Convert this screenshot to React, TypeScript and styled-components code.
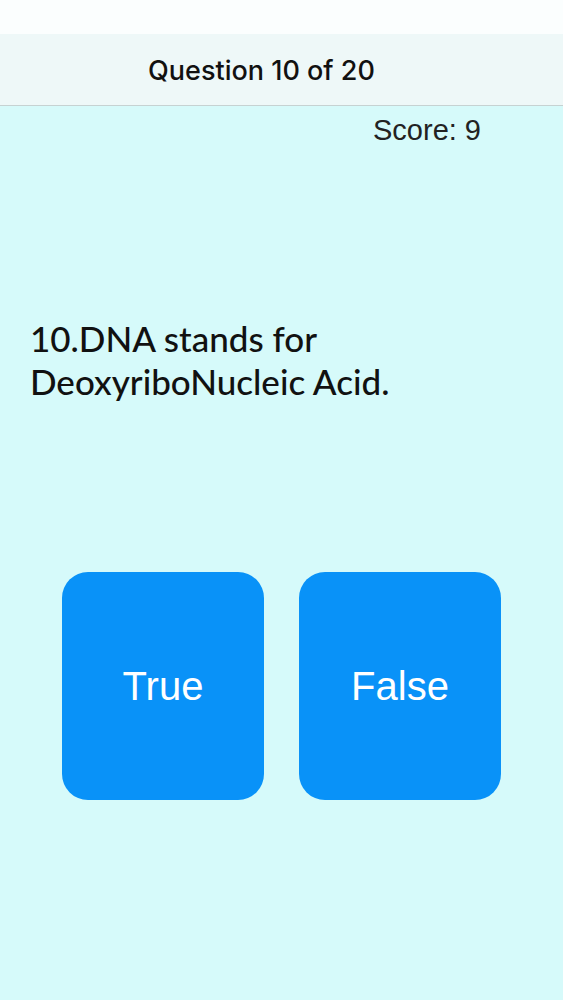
import React from "react";
import styled, { createGlobalStyle } from "styled-components";

const GlobalStyle = createGlobalStyle`
  html, body {
    margin: 0;
    padding: 0;
    background: #d6fafa;
  }
  body {
    font-family: "Liberation Sans", Arial, sans-serif;
  }
`;

export default function App() {
  return (
    <>
      <GlobalStyle />
      <Screen>
        <StatusBar />
        <NavBar>
          <NavTitle>Question 10 of 20</NavTitle>
        </NavBar>
        <ScoreRow>Score: 9</ScoreRow>
        <Question>
          10.DNA stands for
          <br />
          DeoxyriboNucleic Acid.
        </Question>
        <Answers>
          <AnswerBtn>True</AnswerBtn>
          <AnswerBtn>False</AnswerBtn>
        </Answers>
      </Screen>
    </>
  );
}

const Screen = styled.div`
  min-height: 1000px;
  display: flex;
  flex-direction: column;
  background: #d6fafa;
`;

const StatusBar = styled.div`
  height: 34px;
  background: #fbfefe;
`;

const NavBar = styled.header`
  height: 71px;
  display: flex;
  align-items: center;
  justify-content: center;
  padding-right: 40px;
  background: #eef8f8;
  border-bottom: 1px solid #c6d2d2;
`;

const NavTitle = styled.h1`
  margin: 0;
  padding-top: 1px;
  font-family: Inter, "Liberation Sans", sans-serif;
  font-size: 27px;
  font-weight: 500;
  color: #111;
`;

const ScoreRow = styled.div`
  display: flex;
  justify-content: flex-end;
  padding: 7px 82px 0 0;
  font-size: 29px;
  line-height: 34px;
  color: #222;
`;

const Question = styled.p`
  margin: 170px 0 0 30px;
  font-family: Lato, "Noto Sans", sans-serif;
  font-size: 35px;
  font-weight: 500;
  line-height: 43px;
  color: #111;
`;

const Answers = styled.div`
  display: flex;
  justify-content: center;
  gap: 35px;
  margin-top: 169px;
`;

const AnswerBtn = styled.button`
  width: 202px;
  height: 228px;
  border: none;
  border-radius: 26px;
  background: #0992f8;
  color: #fff;
  font-family: "Liberation Sans", Arial, sans-serif;
  font-size: 40px;
  cursor: pointer;
`;
